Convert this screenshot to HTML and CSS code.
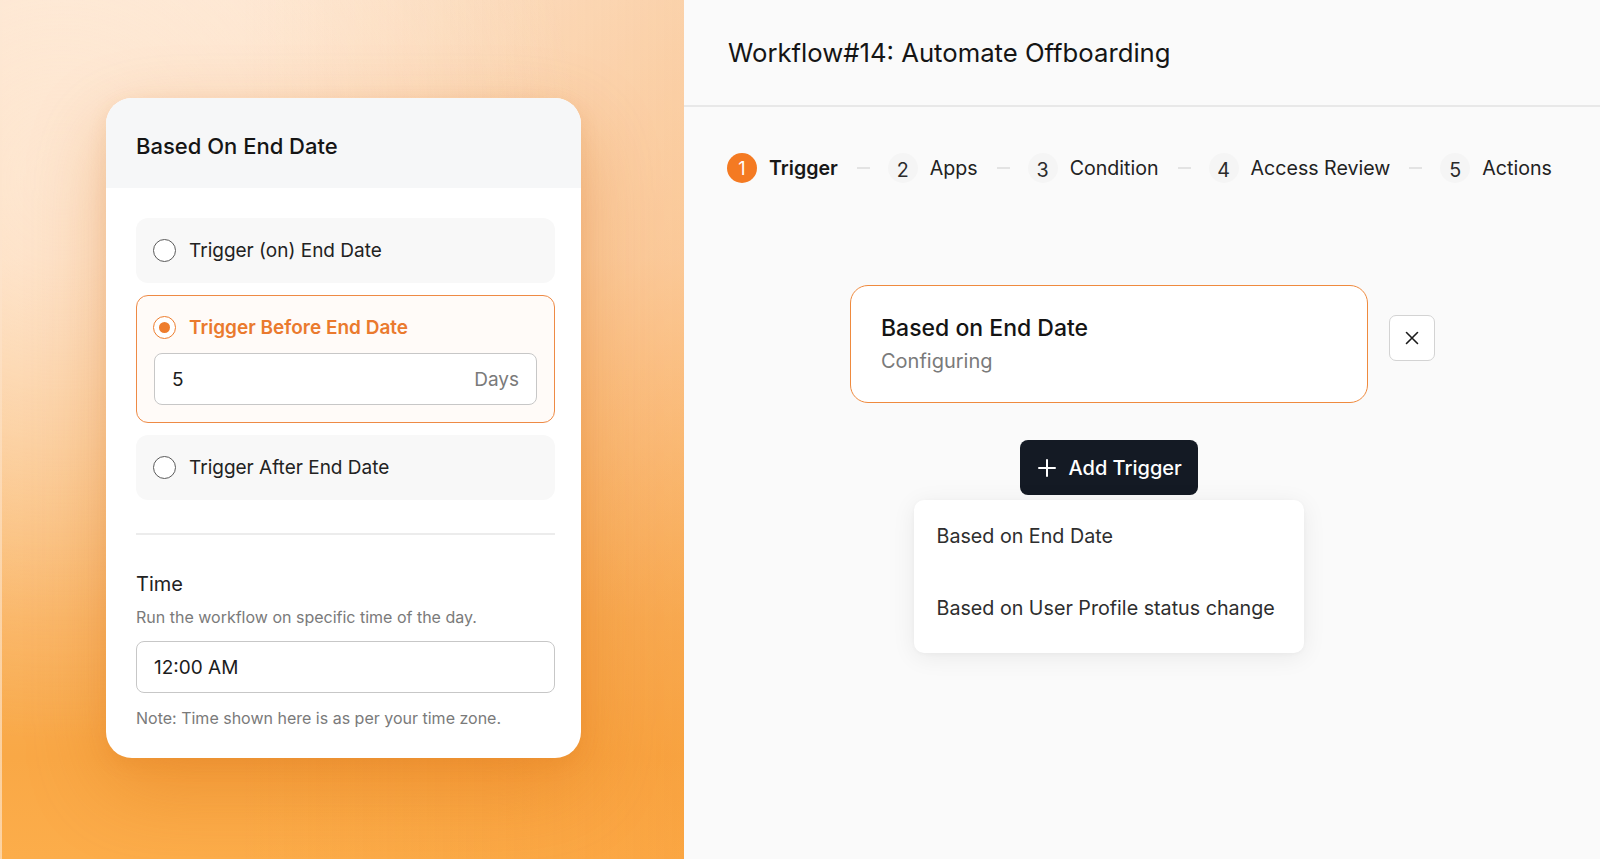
FILE: index.html
```html
<!DOCTYPE html>
<html lang="en">
<head>
<meta charset="utf-8">
<title>Workflow#14: Automate Offboarding</title>
<link rel="stylesheet" href="styles.css">
</head>
<body>
<div class="page">
  <section class="left">
    <div class="config-card">
      <div class="config-head">Based On End Date</div>
      <div class="config-body">
        <label class="option">
          <span class="radio"></span>
          <span class="option-label">Trigger (on) End Date</span>
        </label>
        <div class="option option-selected">
          <div class="option-row">
            <span class="radio radio-on"></span>
            <span class="option-label">Trigger Before End Date</span>
          </div>
          <div class="field field-days">
            <span class="field-value">5</span>
            <span class="field-suffix">Days</span>
          </div>
        </div>
        <label class="option">
          <span class="radio"></span>
          <span class="option-label">Trigger After End Date</span>
        </label>
        <div class="divider"></div>
        <div class="time-title">Time</div>
        <div class="hint">Run the workflow on specific time of the day.</div>
        <div class="field field-time"><span class="field-value">12:00 AM</span></div>
        <div class="hint hint-note">Note: Time shown here is as per your time zone.</div>
      </div>
    </div>
  </section>

  <section class="right">
    <header class="wf-header">Workflow#14: Automate Offboarding</header>
    <nav class="stepper">
      <div class="step step-active"><span class="step-num">1</span><span class="step-label">Trigger</span></div>
      <span class="step-sep"></span>
      <div class="step"><span class="step-num">2</span><span class="step-label">Apps</span></div>
      <span class="step-sep"></span>
      <div class="step"><span class="step-num">3</span><span class="step-label">Condition</span></div>
      <span class="step-sep"></span>
      <div class="step"><span class="step-num">4</span><span class="step-label">Access Review</span></div>
      <span class="step-sep"></span>
      <div class="step"><span class="step-num">5</span><span class="step-label">Actions</span></div>
    </nav>

    <div class="canvas">
      <div class="node-row">
        <div class="node-card">
          <div class="node-title">Based on End Date</div>
          <div class="node-sub">Configuring</div>
        </div>
        <button class="close-btn" aria-label="Remove">
          <svg width="16" height="16" viewBox="0 0 16 16"><path d="M2.5 2.5 L13.5 13.5 M13.5 2.5 L2.5 13.5" stroke="#1b1b1b" stroke-width="1.6" stroke-linecap="round" fill="none"/></svg>
        </button>
      </div>
      <div class="add-area">
        <button class="add-btn">
          <svg width="18" height="18" viewBox="0 0 18 18"><path d="M9 1 V17 M1 9 H17" stroke="#ffffff" stroke-width="2" stroke-linecap="round" fill="none"/></svg>
          <span>Add Trigger</span>
        </button>
        <div class="menu">
          <div class="menu-item">Based on End Date</div>
          <div class="menu-item">Based on User Profile status change</div>
        </div>
      </div>
    </div>
  </section>
</div>
</body>
</html>
```

FILE: styles.css
```css
* { box-sizing: border-box; }
html, body { margin: 0; padding: 0; }
body {
  font-family: Inter, "Noto Sans", "Liberation Sans", sans-serif;
  color: #1a1a1a;
  width: 1600px;
  height: 859px;
  overflow: hidden;
}
.page {
  display: flex;
  width: 1600px;
  height: 859px;
}

/* ---------- left ---------- */
.left {
  width: 684px;
  flex: none;
  height: 859px;
  padding: 98px 0 0 106px;
  border-left: 2px solid rgba(255,255,255,0.5);
  background:
    radial-gradient(ellipse 520px 560px at 60px 180px, rgba(255,238,222,0.6) 0%, rgba(255,238,222,0) 100%),
    linear-gradient(90deg, rgba(244,140,40,0) 35%, rgba(244,140,40,0.22) 100%),
    linear-gradient(180deg, #fde5cf 0%, #fdd9b6 30%, #fbc487 52%, #f9b05a 72%, #f9a846 88%, #fcad4a 100%);
}
.config-card {
  width: 475px;
  margin-left: -2px;
  background: #ffffff;
  border-radius: 26px;
  overflow: hidden;
  box-shadow: 0 30px 80px rgba(214, 104, 10, 0.32), 0 6px 20px rgba(200, 100, 20, 0.12);
}
.config-head {
  height: 90px;
  padding: 6px 0 0 30px;
  display: flex;
  align-items: center;
  background: #f6f7f8;
  font-size: 22px;
  font-weight: 500;
  color: #151515;
}
.config-body {
  padding: 30px 26px 30px 30px;
  display: flex;
  flex-direction: column;
}
.option {
  display: flex;
  align-items: center;
  gap: 13px;
  height: 65px;
  padding-left: 17px;
  border-radius: 12px;
  background: #f8f8f8;
}
.option + .option { margin-top: 12px; }
.option-selected {
  height: auto;
  display: block;
  padding: 17px 17px 17px 17px;
  background: #fffbf8;
  border: 1.5px solid #ee8a45;
}
.option-row {
  display: flex;
  align-items: center;
  gap: 13px;
  height: 28px;
  margin-left: -1px;
}
.option-label {
  font-size: 19px;
  color: #222;
}
.option-selected .option-label {
  color: #ea7a2e;
  font-weight: 600;
}
.radio {
  width: 23px;
  height: 23px;
  flex: none;
  border-radius: 50%;
  border: 1.5px solid #5a5a5a;
  background: #fff;
}
.radio-on {
  border-color: #ee7d2d;
  display: flex;
  align-items: center;
  justify-content: center;
}
.radio-on::after {
  content: "";
  width: 11px;
  height: 11px;
  border-radius: 50%;
  background: #ee7d2d;
}
.field {
  display: flex;
  align-items: center;
  justify-content: space-between;
  height: 52px;
  padding: 0 17px;
  border: 1.5px solid #c7c7c7;
  border-radius: 8px;
  background: #fff;
  font-size: 19px;
}
.field-days { margin-top: 12px; }
.field-value { color: #1c1c1c; }
.field-suffix { color: #7a7a7a; }
.divider {
  height: 2px;
  background: #ececec;
  margin-top: 33px;
}
.time-title {
  margin-top: 37px;
  font-size: 20px;
  line-height: 24px;
  color: #222;
}
.hint {
  margin-top: 11px;
  font-size: 16px;
  line-height: 20px;
  color: #7a7a7a;
}
.field-time {
  margin-top: 14px;
  height: 52px;
}
.hint-note { margin-top: 15px; }

/* ---------- right ---------- */
.right {
  flex: 1;
  background: #fafafa;
  display: flex;
  flex-direction: column;
}
.wf-header {
  height: 107px;
  padding-left: 44px;
  display: flex;
  align-items: center;
  border-bottom: 2px solid #e8e8e8;
  font-size: 25.7px;
  color: #151515;
}
.stepper {
  display: flex;
  align-items: center;
  margin-top: 46px;
  padding-left: 43px;
  height: 30px;
}
.step {
  display: flex;
  align-items: center;
  gap: 12px;
}
.step-num {
  width: 30px;
  height: 30px;
  border-radius: 50%;
  background: #f5f5f5;
  display: flex;
  align-items: center;
  justify-content: center;
  font-size: 19.7px;
  color: #2a2a2a;
  padding-top: 3px;
}
.step-active .step-num {
  background: #f47a22;
  color: #fff;
  font-size: 18px;
  padding-top: 0;
}
.step-label {
  font-size: 19.6px;
  color: #222;
}
.step-active .step-label {
  font-weight: 600;
  color: #171717;
}
.step-sep {
  width: 13px;
  height: 2px;
  background: #e3e3e3;
  margin: 0 18px 0 19px;
}

.canvas {
  margin: 102px auto 0;
  width: 585px;
}
.node-row {
  display: flex;
  align-items: flex-start;
  gap: 21px;
}
.node-card {
  width: 518px;
  height: 118px;
  border: 1.5px solid #ef8a3e;
  border-radius: 18px;
  background: #fff;
  padding: 28px 0 0 30.5px;
}
.node-title {
  font-size: 23px;
  line-height: 28px;
  font-weight: 500;
  color: #141414;
}
.node-sub {
  margin-top: 7px;
  font-size: 20px;
  line-height: 24px;
  color: #7a7a7a;
}
.close-btn {
  margin-top: 30px;
  width: 46px;
  height: 46px;
  border: 1.5px solid #d3d3d3;
  border-radius: 7px;
  background: #fff;
  display: flex;
  align-items: center;
  justify-content: center;
  padding: 0;
}
.add-area {
  width: 518px;
  display: flex;
  flex-direction: column;
  align-items: center;
}
.add-btn {
  margin-top: 37px;
  height: 55px;
  width: 178px;
  padding: 0 0 0 18px;
  border: none;
  border-radius: 8px;
  background: #141a24;
  color: #fff;
  display: flex;
  align-items: center;
  gap: 13px;
  font-family: inherit;
  font-size: 20px;
  font-weight: 500;
}
.menu {
  margin-top: 5px;
  width: 390px;
  padding-bottom: 9px;
  background: #fff;
  border-radius: 10px;
  box-shadow: 0 4px 24px rgba(0, 0, 0, 0.07), 0 1px 4px rgba(0,0,0,0.03);
}
.menu-item {
  height: 72px;
  display: flex;
  align-items: center;
  padding-left: 23px;
  font-size: 19.7px;
  color: #2e2e2e;
}
```
